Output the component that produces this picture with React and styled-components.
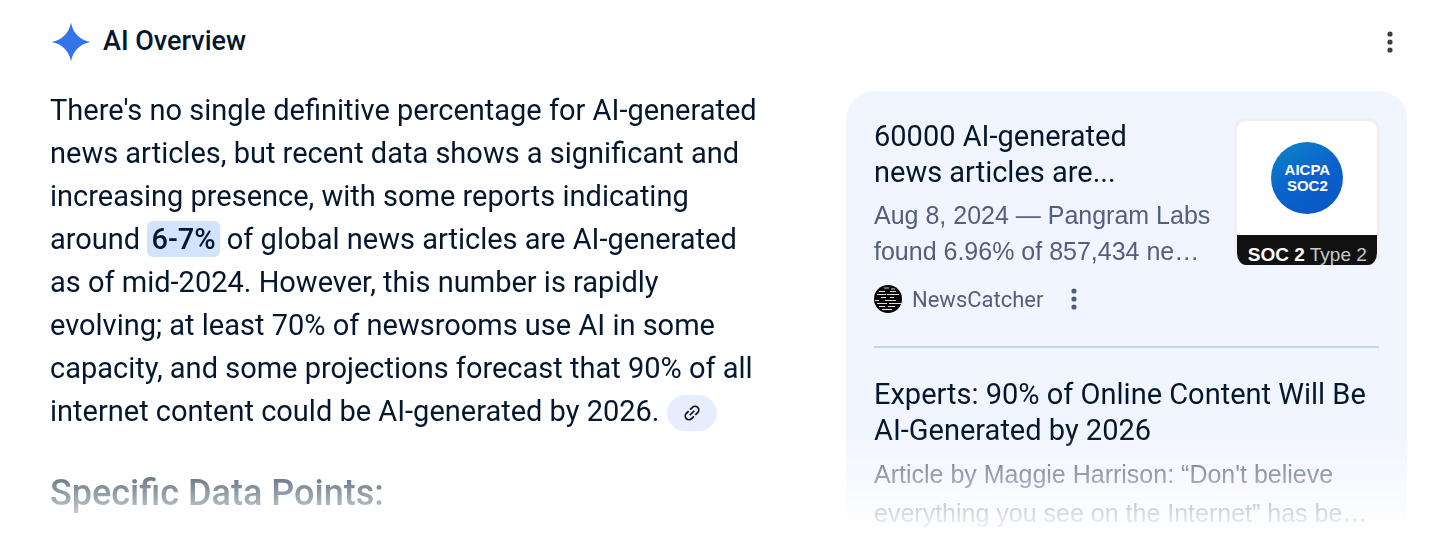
import React from 'react';
import styled, { createGlobalStyle } from 'styled-components';

const GlobalStyle = createGlobalStyle`
  * {
    box-sizing: border-box;
  }

  body {
    margin: 0;
    background-color: #fff;
    color: #04172e;
    font-family: Roboto, Arial, sans-serif;
  }
`;

const Page = styled.main`
  padding: 0 49px 0 50px;
`;

const Header = styled.header`
  display: flex;
  align-items: center;
  height: 83px;
`;

const HeaderTitle = styled.h1`
  flex: 1;
  margin: 0 0 2px 11px;
  font-size: 27px;
  font-weight: 500;
  line-height: 32px;
`;

const IconButton = styled.button`
  display: flex;
  align-items: center;
  justify-content: center;
  width: 34px;
  height: 34px;
  padding: 0;
  border: none;
  background: none;
  color: ${(props) => props.$color};
  cursor: pointer;
`;

/* Collapsed content fades out at the bottom */
const Content = styled.div`
  display: grid;
  grid-template-columns: minmax(0, 4fr) minmax(0, 3fr);
  gap: 48px;
  padding-top: 6px;
  mask-image: linear-gradient(to bottom, #000 calc(100% - 104px), transparent calc(100% - 2px));
`;

const Summary = styled.p`
  margin: 0;
  font-size: 29px;
  line-height: 43px;
`;

const Highlight = styled.strong`
  padding: 1px 4px;
  border-radius: 6px;
  background-color: #d3e3fd;
  font-weight: 500;
`;

const LinkChip = styled.button`
  display: inline-flex;
  align-items: center;
  justify-content: center;
  width: 50px;
  height: 36px;
  padding: 0;
  border: none;
  border-radius: 18px;
  background-color: #e5edff;
  color: #0a0a0a;
  vertical-align: middle;
  cursor: pointer;
`;

const SectionTitle = styled.h2`
  margin: 38px 0 0;
  color: #001d35;
  font-size: 36px;
  font-weight: 500;
  line-height: 44px;
`;

const Card = styled.aside`
  margin-top: 2px;
  padding: 27px 28px 6px;
  border-radius: 28px 28px 0 0;
  background-color: #f1f5ff;
`;

const Article = styled.article`
  & + & {
    margin-top: 33px;
    padding-top: 28px;
    border-top: 2px solid #c0d6fb;
  }
`;

const ArticleRow = styled.div`
  display: flex;
  justify-content: space-between;
  gap: 24px;
`;

const ArticleTitle = styled.h3`
  margin: 0 0 7px;
  font-size: 29px;
  font-weight: 400;
  line-height: 36px;
  white-space: nowrap;
`;

const Snippet = styled.p`
  margin: 0;
  color: #545d7e;
  font-family: 'Liberation Sans', Arial, sans-serif;
  font-size: 25px;
  line-height: ${(props) => (props.$loose ? '39px' : '36px')};
  white-space: nowrap;
`;

const Thumbnail = styled.div`
  display: flex;
  flex: none;
  flex-direction: column;
  width: 146px;
  height: 147px;
  border: 3px solid #f3eef2;
  border-bottom: none;
  border-radius: 12px;
  background-color: #fff;
  overflow: hidden;
`;

const BadgeArea = styled.div`
  display: flex;
  flex: 1;
  align-items: center;
  justify-content: center;
`;

const Badge = styled.div`
  display: flex;
  align-items: center;
  justify-content: center;
  width: 72px;
  height: 72px;
  border-radius: 50%;
  background: linear-gradient(150deg, #0c86c8, #0b62cc 50%, #0a55c4);
  color: #fff;
  font-family: 'Liberation Sans', Arial, sans-serif;
  font-size: 15px;
  font-weight: 700;
  line-height: 16px;
  text-align: center;
`;

const Caption = styled.div`
  height: 30px;
  padding-top: 8px;
  background-color: #111;
  color: #c9c9c9;
  font-family: 'Liberation Sans', Arial, sans-serif;
  font-size: 19px;
  line-height: 24px;
  text-align: center;
  white-space: nowrap;

  b {
    color: #fff;
  }
`;

const Source = styled.div`
  display: flex;
  align-items: center;
  height: 28px;
  margin-top: 16px;
  color: #545d7e;
  font-size: 22px;
`;

const SourceName = styled.span`
  margin: 0 14px 0 10px;
`;

const Sparkle = () => (
  <svg width="42" height="42" viewBox="0 0 42 42" aria-hidden="true">
    <path
      d="M21 1.500C22.800 12 30 19.200 40.500 21C30 22.800 22.800 30 21 40.500C19.200 30 12 22.800 1.500 21C12 19.200 19.200 12 21 1.500Z"
      fill="#3474ea"
    />
  </svg>
);

const DotsIcon = () => (
  <svg width="8" height="24" viewBox="0 0 8 24" fill="currentColor" aria-hidden="true">
    <circle cx="4" cy="4" r="2.600" />
    <circle cx="4" cy="12" r="2.600" />
    <circle cx="4" cy="20" r="2.600" />
  </svg>
);

const LinkIcon = () => (
  <svg
    width="20"
    height="20"
    viewBox="0 0 20 20"
    fill="none"
    stroke="currentColor"
    strokeWidth="1.700"
    aria-hidden="true"
  >
    <g transform="rotate(-45 10 10)">
      <path d="M9 6.300H5.700a3.700 3.700 0 0 0 0 7.400H9M11 6.300h3.300a3.700 3.700 0 0 1 0 7.400H11M6.800 10h6.400" />
    </g>
  </svg>
);

const dashes = [
  'M10 3h5M17 4h4',
  'M5 6.500h6M16 6.500h6',
  'M3 9.500h9M13 9.500h12',
  'M7 12.500h5M16 12.500h4',
  'M1 15.500h4M11 15.500h11',
  'M3 18.500h10M15 18.500h12',
  'M5 21.500h6M14 21.500h7',
  'M8 24.500h10',
];

const SourceLogo = () => (
  <svg width="28" height="28" viewBox="0 0 28 28" aria-hidden="true">
    <circle cx="14" cy="14" r="14" fill="#050505" />
    {dashes.map((d) => (
      <path key={d} d={d} stroke="#dcdcdc" strokeWidth="1.200" />
    ))}
  </svg>
);

const App = () => {
  return (
    <Page>
      <GlobalStyle />
      <Header>
        <Sparkle />
        <HeaderTitle>AI Overview</HeaderTitle>
        <IconButton $color="#3c3f43" aria-label="More options">
          <DotsIcon />
        </IconButton>
      </Header>
      <Content>
        <section>
          <Summary>
            There's no single definitive percentage for AI-generated
            <br />
            news articles, but recent data shows a significant and
            <br />
            increasing presence, with some reports indicating
            <br />
            around <Highlight>6-7%</Highlight> of global news articles are AI-generated
            <br />
            as of mid-2024. However, this number is rapidly
            <br />
            evolving; at least 70% of newsrooms use AI in some
            <br />
            capacity, and some projections forecast that 90% of all
            <br />
            internet content could be AI-generated by 2026.{' '}
            <LinkChip aria-label="View related links">
              <LinkIcon />
            </LinkChip>
          </Summary>
          <SectionTitle>Specific Data Points:</SectionTitle>
        </section>
        <Card>
          <Article>
            <ArticleRow>
              <div>
                <ArticleTitle>
                  60000 AI-generated
                  <br />
                  news articles are...
                </ArticleTitle>
                <Snippet>
                  Aug 8, 2024 — Pangram Labs
                  <br />
                  found 6.96% of 857,434 ne…
                </Snippet>
              </div>
              <Thumbnail>
                <BadgeArea>
                  <Badge>
                    AICPA
                    <br />
                    SOC2
                  </Badge>
                </BadgeArea>
                <Caption>
                  <b>SOC 2</b> Type 2
                </Caption>
              </Thumbnail>
            </ArticleRow>
            <Source>
              <SourceLogo />
              <SourceName>NewsCatcher</SourceName>
              <IconButton $color="#545d7e" aria-label="About this result">
                <DotsIcon />
              </IconButton>
            </Source>
          </Article>
          <Article>
            <ArticleTitle>
              Experts: 90% of Online Content Will Be
              <br />
              AI-Generated by 2026
            </ArticleTitle>
            <Snippet $loose>
              Article by Maggie Harrison: “Don't believe
              <br />
              everything you see on the Internet” has be…
            </Snippet>
          </Article>
        </Card>
      </Content>
    </Page>
  );
};

export default App;
